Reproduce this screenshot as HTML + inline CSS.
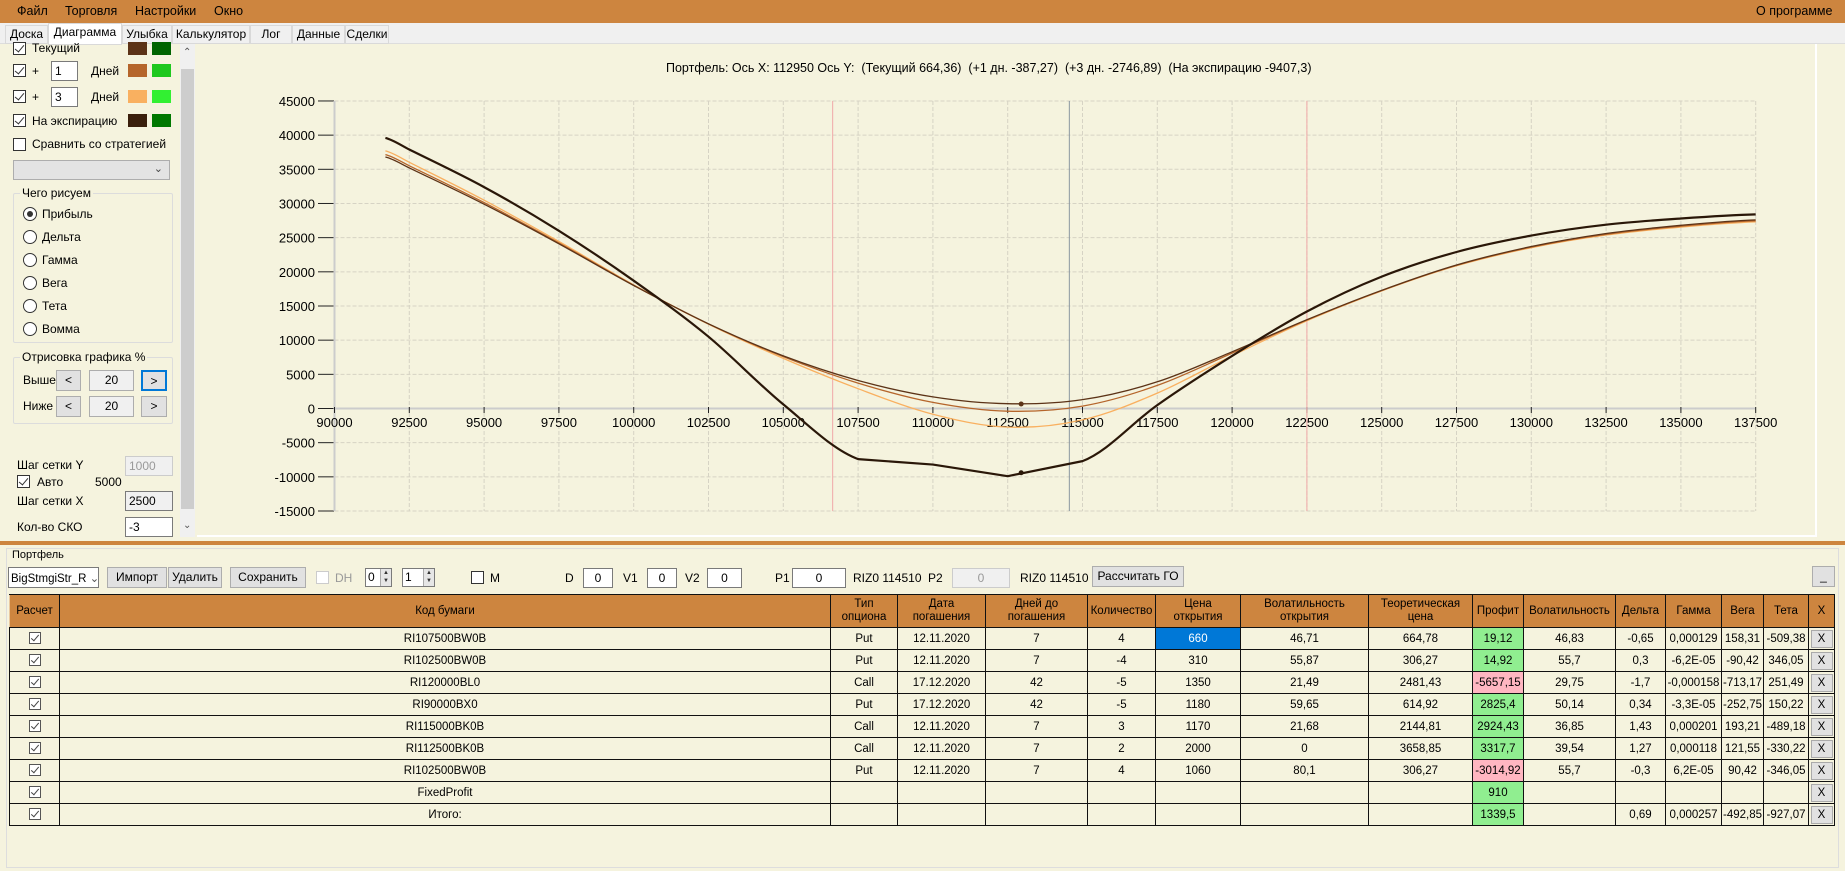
<!DOCTYPE html>
<html><head><meta charset="utf-8">
<style>
*{box-sizing:border-box;margin:0;padding:0}
body{width:1845px;height:871px;overflow:hidden;background:#f5f3de;font-family:"Liberation Sans",sans-serif;font-size:12px;color:#000;position:relative}
.a{position:absolute;white-space:nowrap}
.menu{left:0;top:0;width:1845px;height:23px;background:#cd853f}
.menu span{position:absolute;top:4px;font-size:12.5px}
.tab{position:absolute;top:25px;height:19px;background:#f0f0f0;border:1px solid #d9d9d9;font-size:12px;text-align:center;line-height:17px}
.cb{position:absolute;width:13px;height:13px;border:1px solid #333;background:#fff}
.cb.c::after{content:"";position:absolute;left:3px;top:0px;width:4px;height:8px;border:solid #333;border-width:0 1.5px 1.5px 0;transform:rotate(40deg)}
.rd{position:absolute;width:14px;height:14px;border:1px solid #333;border-radius:50%;background:#fff}
.sw{position:absolute;width:19px;height:13px}
.tb{position:absolute;background:#fff;border:1px solid #7a7a7a;height:20px;font-size:12px;padding:2px 3px}
.btn{position:absolute;background:#e1e1e1;border:1px solid #adadad;height:21px;font-size:12px;text-align:center;line-height:19px}
.grp{position:absolute;border:1px solid #dcdcdc;border-radius:2px}
.grp span{position:absolute;top:-8px;left:6px;background:#f5f3de;padding:0 2px}
table{position:absolute;left:9px;top:594px;border-collapse:collapse;font-size:11.5px;table-layout:fixed}
td{border:1px solid #111;height:22px;text-align:center;padding:0;overflow:hidden}
tr.h td{background:#cd853f;height:33px;line-height:13px;border-color:#111;border-left-color:#e9c9a0}
.g{background:#90ee90}.r{background:#ffb6c1}.bl{background:#0078d7;color:#fff}
.x{background:#e1e1e1;border:1px solid #aaa;display:inline-block;width:22px;height:18px;line-height:17px}
.ck{display:inline-block;width:12px;height:12px;border:1px solid #555;position:relative;background:#fff;vertical-align:middle}
.ck::after{content:"";position:absolute;left:3px;top:0;width:3px;height:7px;border:solid #444;border-width:0 1px 1px 0;transform:rotate(40deg)}
.spin{position:absolute;width:11px;height:17px;background:#e6e6e6;border-left:1px solid #aaa;right:0;top:0;font-size:6px;line-height:8px;text-align:center;color:#333}
</style></head><body>
<div class="a menu">
<span style="left:17px">Файл</span><span style="left:65px">Торговля</span><span style="left:135px">Настройки</span><span style="left:214px">Окно</span><span style="left:1756px">О программе</span>
</div>
<div class="a" style="left:0;top:23px;width:1845px;height:21px;background:#f0f0f0;border-bottom:1px solid #ddd"></div>
<div class="tab" style="left:5px;width:43px">Доска</div>
<div class="tab" style="left:48px;top:23px;height:22px;width:74px;background:#fff">Диаграмма</div>
<div class="tab" style="left:122px;width:50px">Улыбка</div>
<div class="tab" style="left:172px;width:78px">Калькулятор</div>
<div class="tab" style="left:250px;width:42px">Лог</div>
<div class="tab" style="left:292px;width:53px">Данные</div>
<div class="tab" style="left:345px;width:44px">Сделки</div>

<div class="cb c" style="left:13px;top:42px"></div><div class="a" style="left:32px;top:41px">Текущий</div>
<div class="sw" style="left:128px;top:42px;background:#5c3317"></div><div class="sw" style="left:152px;top:42px;background:#006400"></div>
<div class="cb c" style="left:13px;top:64px"></div><div class="a" style="left:32px;top:64px">+</div>
<div class="tb" style="left:51px;top:61px;width:27px">1</div><div class="a" style="left:91px;top:64px">Дней</div>
<div class="sw" style="left:128px;top:64px;background:#b5652b"></div><div class="sw" style="left:152px;top:64px;background:#1ec81e"></div>
<div class="cb c" style="left:13px;top:90px"></div><div class="a" style="left:32px;top:90px">+</div>
<div class="tb" style="left:51px;top:87px;width:27px">3</div><div class="a" style="left:91px;top:90px">Дней</div>
<div class="sw" style="left:128px;top:90px;background:#f9b060"></div><div class="sw" style="left:152px;top:90px;background:#32f032"></div>
<div class="cb c" style="left:13px;top:114px"></div><div class="a" style="left:32px;top:114px">На экспирацию</div>
<div class="sw" style="left:128px;top:114px;background:#3a1f0c"></div><div class="sw" style="left:152px;top:114px;background:#007800"></div>
<div class="cb" style="left:13px;top:138px"></div><div class="a" style="left:32px;top:137px">Сравнить со стратегией</div>
<div class="a" style="left:13px;top:160px;width:157px;height:20px;background:#e3e3e3;border:1px solid #adadad"><span style="position:absolute;right:6px;top:1px;font-size:11px;color:#444">&#8964;</span></div>
<div class="grp" style="left:13px;top:193px;width:160px;height:150px"><span>Чего рисуем</span></div>
<div class="rd" style="left:23px;top:207px"><div style="position:absolute;left:3px;top:3px;width:6px;height:6px;border-radius:50%;background:#333"></div></div><div class="a" style="left:42px;top:207px">Прибыль</div>
<div class="rd" style="left:23px;top:230px"></div><div class="a" style="left:42px;top:230px">Дельта</div>
<div class="rd" style="left:23px;top:253px"></div><div class="a" style="left:42px;top:253px">Гамма</div>
<div class="rd" style="left:23px;top:276px"></div><div class="a" style="left:42px;top:276px">Вега</div>
<div class="rd" style="left:23px;top:299px"></div><div class="a" style="left:42px;top:299px">Тета</div>
<div class="rd" style="left:23px;top:322px"></div><div class="a" style="left:42px;top:322px">Вомма</div>
<div class="grp" style="left:13px;top:357px;width:160px;height:67px"><span>Отрисовка графика %</span></div>
<div class="a" style="left:23px;top:373px">Выше</div>
<div class="btn" style="left:56px;top:370px;width:25px">&lt;</div><div class="btn" style="left:89px;top:370px;width:45px;background:#f0f0f0">20</div><div class="btn" style="left:141px;top:370px;width:26px;border:2px solid #0078d7">&gt;</div>
<div class="a" style="left:23px;top:399px">Ниже</div>
<div class="btn" style="left:56px;top:396px;width:25px">&lt;</div><div class="btn" style="left:89px;top:396px;width:45px;background:#f0f0f0">20</div><div class="btn" style="left:141px;top:396px;width:26px">&gt;</div>
<div class="a" style="left:17px;top:458px">Шаг сетки Y</div><div class="tb" style="left:125px;top:456px;width:48px;background:#f0f0f0;border-color:#ccc;color:#999">1000</div>
<div class="cb c" style="left:17px;top:475px"></div><div class="a" style="left:37px;top:475px">Авто</div><div class="a" style="left:95px;top:475px">5000</div>
<div class="a" style="left:17px;top:494px">Шаг сетки X</div><div class="tb" style="left:125px;top:491px;width:48px;background:#f0f0f0">2500</div>
<div class="a" style="left:17px;top:520px">Кол-во СКО</div><div class="tb" style="left:125px;top:517px;width:48px">-3</div>
<div class="a" style="left:180px;top:44px;width:15px;height:493px;background:#f0f0f0"></div>
<div class="a" style="left:181px;top:69px;width:13px;height:440px;background:#cdcdcd"></div>
<div class="a" style="left:183px;top:47px;font-size:10px;color:#555">&#8963;</div>
<div class="a" style="left:183px;top:520px;font-size:10px;color:#555">&#8964;</div>

<div class="a" style="left:197px;top:44px;width:1620px;height:493px;border-right:2px solid #fff;border-bottom:2px solid #fff"></div>
<div class="a" style="left:666px;top:61px;font-size:12.5px">Портфель: Ось X: 112950 Ось Y:&nbsp; (Текущий 664,36)&nbsp; (+1 дн. -387,27)&nbsp; (+3 дн. -2746,89)&nbsp; (На экспирацию -9407,3)</div>
<svg id="ch" class="a" style="left:0;top:0" width="1845" height="540"></svg>

<div class="a" style="left:0;top:541px;width:1845px;height:4px;background:#cd853f"></div>
<div class="a" style="left:6px;top:548px;width:1833px;height:320px;border:1px solid #ddd"></div>
<div class="a" style="left:10px;top:549px;background:#f5f3de;padding:0 2px;font-size:11px">Портфель</div>
<div class="a" style="left:8px;top:567px;width:91px;height:21px;background:#fff;border:1px solid #7a7a7a;font-size:11.5px;padding:3px 2px">BigStmgiStr_R <span style="color:#555">&#8964;</span></div>
<div class="btn" style="left:107px;top:567px;width:60px">Импорт</div>
<div class="btn" style="left:168px;top:567px;width:54px">Удалить</div>
<div class="btn" style="left:230px;top:567px;width:76px">Сохранить</div>
<div class="cb" style="left:316px;top:571px;border-color:#ccc"></div><div class="a" style="left:335px;top:571px;color:#999">DH</div>
<div class="tb" style="left:365px;top:568px;width:27px;height:19px;padding:1px 2px">0<div class="spin">▲<br>▼</div></div>
<div class="tb" style="left:402px;top:568px;width:33px;height:19px;padding:1px 2px">1<div class="spin">▲<br>▼</div></div>
<div class="cb" style="left:471px;top:571px"></div><div class="a" style="left:490px;top:571px">M</div>
<div class="a" style="left:565px;top:571px">D</div><div class="tb" style="left:583px;top:568px;width:30px;text-align:center">0</div>
<div class="a" style="left:623px;top:571px">V1</div><div class="tb" style="left:647px;top:568px;width:30px;text-align:center">0</div>
<div class="a" style="left:685px;top:571px">V2</div><div class="tb" style="left:707px;top:568px;width:35px;text-align:center">0</div>
<div class="a" style="left:775px;top:571px">P1</div><div class="tb" style="left:792px;top:568px;width:54px;text-align:center">0</div>
<div class="a" style="left:853px;top:571px">RIZ0 114510</div>
<div class="a" style="left:928px;top:571px">P2</div><div class="tb" style="left:952px;top:568px;width:58px;text-align:center;background:#f0f0f0;border-color:#ccc;color:#999">0</div>
<div class="a" style="left:1020px;top:571px">RIZ0 114510</div>
<div class="btn" style="left:1092px;top:566px;width:92px">Рассчитать ГО</div>
<div class="btn" style="left:1812px;top:566px;width:23px">_</div>

<table>
<colgroup><col style="width:50px"><col style="width:771px"><col style="width:67px"><col style="width:88px"><col style="width:102px"><col style="width:68px"><col style="width:85px"><col style="width:128px"><col style="width:104px"><col style="width:51px"><col style="width:92px"><col style="width:50px"><col style="width:56px"><col style="width:42px"><col style="width:45px"><col style="width:26px"></colgroup>
<tr class="h"><td>Расчет</td><td>Код бумаги</td><td>Тип<br>опциона</td><td>Дата<br>погашения</td><td>Дней до<br>погашения</td><td>Количество</td><td>Цена<br>открытия</td><td>Волатильность<br>открытия</td><td>Теоретическая<br>цена</td><td>Профит</td><td>Волатильность</td><td>Дельта</td><td>Гамма</td><td>Вега</td><td>Тета</td><td>X</td></tr>
<tr><td><span class="ck"></span></td><td>RI107500BW0B</td><td>Put</td><td>12.11.2020</td><td>7</td><td>4</td><td class="bl">660</td><td>46,71</td><td>664,78</td><td class="g">19,12</td><td>46,83</td><td>-0,65</td><td>0,000129</td><td>158,31</td><td>-509,38</td><td><span class="x">X</span></td></tr>
<tr><td><span class="ck"></span></td><td>RI102500BW0B</td><td>Put</td><td>12.11.2020</td><td>7</td><td>-4</td><td>310</td><td>55,87</td><td>306,27</td><td class="g">14,92</td><td>55,7</td><td>0,3</td><td>-6,2E-05</td><td>-90,42</td><td>346,05</td><td><span class="x">X</span></td></tr>
<tr><td><span class="ck"></span></td><td>RI120000BL0</td><td>Call</td><td>17.12.2020</td><td>42</td><td>-5</td><td>1350</td><td>21,49</td><td>2481,43</td><td class="r">-5657,15</td><td>29,75</td><td>-1,7</td><td>-0,000158</td><td>-713,17</td><td>251,49</td><td><span class="x">X</span></td></tr>
<tr><td><span class="ck"></span></td><td>RI90000BX0</td><td>Put</td><td>17.12.2020</td><td>42</td><td>-5</td><td>1180</td><td>59,65</td><td>614,92</td><td class="g">2825,4</td><td>50,14</td><td>0,34</td><td>-3,3E-05</td><td>-252,75</td><td>150,22</td><td><span class="x">X</span></td></tr>
<tr><td><span class="ck"></span></td><td>RI115000BK0B</td><td>Call</td><td>12.11.2020</td><td>7</td><td>3</td><td>1170</td><td>21,68</td><td>2144,81</td><td class="g">2924,43</td><td>36,85</td><td>1,43</td><td>0,000201</td><td>193,21</td><td>-489,18</td><td><span class="x">X</span></td></tr>
<tr><td><span class="ck"></span></td><td>RI112500BK0B</td><td>Call</td><td>12.11.2020</td><td>7</td><td>2</td><td>2000</td><td>0</td><td>3658,85</td><td class="g">3317,7</td><td>39,54</td><td>1,27</td><td>0,000118</td><td>121,55</td><td>-330,22</td><td><span class="x">X</span></td></tr>
<tr><td><span class="ck"></span></td><td>RI102500BW0B</td><td>Put</td><td>12.11.2020</td><td>7</td><td>4</td><td>1060</td><td>80,1</td><td>306,27</td><td class="r">-3014,92</td><td>55,7</td><td>-0,3</td><td>6,2E-05</td><td>90,42</td><td>-346,05</td><td><span class="x">X</span></td></tr>
<tr><td><span class="ck"></span></td><td>FixedProfit</td><td></td><td></td><td></td><td></td><td></td><td></td><td></td><td class="g">910</td><td></td><td></td><td></td><td></td><td></td><td><span class="x">X</span></td></tr>
<tr><td><span class="ck"></span></td><td>Итого:</td><td></td><td></td><td></td><td></td><td></td><td></td><td></td><td class="g">1339,5</td><td></td><td>0,69</td><td>0,000257</td><td>-492,85</td><td>-927,07</td><td><span class="x">X</span></td></tr>
</table>

<script>
(function(){
var svg=document.getElementById('ch'),s='';
function X(v){return 334.5+(v-90000)/2500*74.8}
function Y(v){return 408.5-v/5000*34.17}
for(var i=0;i<=19;i++){var x=X(90000+i*2500);s+='<line x1="'+x+'" y1="101" x2="'+x+'" y2="511" stroke="#d6d3c4" stroke-dasharray="4,2"/>';}
for(var j=-3;j<=9;j++){var y=Y(j*5000);s+='<line x1="334.5" y1="'+y+'" x2="'+X(137500)+'" y2="'+y+'" stroke="#d6d3c4" stroke-dasharray="4,2"/>';
 s+='<line x1="318" y1="'+y+'" x2="334" y2="'+y+'" stroke="#222"/>';
 s+='<text x="315" y="'+(y+5)+'" text-anchor="end" font-size="13" font-family="Liberation Sans">'+(j*5000)+'</text>';}
s+='<line x1="334.5" y1="101" x2="334.5" y2="511" stroke="#ccc" stroke-width="2"/>';
s+='<line x1="334.5" y1="408.5" x2="'+X(137500)+'" y2="408.5" stroke="#ccc" stroke-width="2"/>';
for(var i=0;i<=19;i++){var x=X(90000+i*2500);s+='<line x1="'+x+'" y1="407" x2="'+x+'" y2="413" stroke="#222"/><text x="'+x+'" y="427" text-anchor="middle" font-size="13" font-family="Liberation Sans">'+(90000+i*2500)+'</text>';}
s+='<line x1="'+X(106650)+'" y1="101" x2="'+X(106650)+'" y2="511" stroke="#f0a8a8"/>';
s+='<line x1="'+X(122500)+'" y1="101" x2="'+X(122500)+'" y2="511" stroke="#f0a8a8"/>';
s+='<line x1="'+X(114560)+'" y1="101" x2="'+X(114560)+'" y2="511" stroke="#8a96a0"/>';
function cr(p){var d='M'+X(p[0][0]).toFixed(1)+' '+Y(p[0][1]).toFixed(1);
 for(var i=0;i<p.length-1;i++){var p0=p[i-1]||p[i],p1=p[i],p2=p[i+1],p3=p[i+2]||p2;
  var a=[X(p0[0]),Y(p0[1])],b=[X(p1[0]),Y(p1[1])],c=[X(p2[0]),Y(p2[1])],e=[X(p3[0]),Y(p3[1])];
  var h=c[0]-b[0],h0=b[0]-a[0]||h,h1=e[0]-c[0]||h;
  var m1=(c[1]-a[1])/(h+h0),m2=(e[1]-b[1])/(h+h1);
  d+=' C'+(b[0]+h/3).toFixed(1)+' '+(b[1]+m1*h/3).toFixed(1)+' '+(c[0]-h/3).toFixed(1)+' '+(c[1]-m2*h/3).toFixed(1)+' '+c[0].toFixed(1)+' '+c[1].toFixed(1);}
 return d;}
var cur=[[91700,36800],[92500,35200],[95000,29900],[97500,24100],[100000,18000],[102500,12400],[105000,7700],[107500,4100],[110000,1700],[112500,700],[115000,1300],[117500,3900],[120000,8300],[122500,13000],[125000,17300],[127500,21000],[130000,23700],[132500,25600],[135000,26800],[137500,27600]];
function mk(a,b,c){return cur.map(function(p){var x=p[0],t=(x-112950)/5300;var bump=Math.exp(-t*t);return [x,p[1]-a*bump+b*(x<101000?(101000-x)/9300:0)-c*(x>121000?(x-121000)/16500:0)];});}
var p1=mk(1100,350,150),p3=mk(3450,900,300);
s+='<path d="'+cr(p3)+'" fill="none" stroke="#f9b060" stroke-width="1.3"/>';
s+='<path d="'+cr(p1)+'" fill="none" stroke="#b5652b" stroke-width="1.3"/>';
s+='<path d="'+cr(cur)+'" fill="none" stroke="#5c3317" stroke-width="1.3"/>';
var expL=[[91700,39600],[92500,37900],[95000,32400],[97500,26000],[100000,18700],[102500,10500],[105000,600],[107500,-7400]];
var expR=[[115000,-7700],[117500,500],[120000,7700],[122500,14200],[125000,19300],[127500,22900],[130000,25300],[132500,26900],[135000,27800],[137500,28400]];
var d=cr(expL)+' L'+X(110000)+' '+Y(-8200)+' L'+X(112500)+' '+Y(-9900)+' L'+X(115000)+' '+Y(-7700)+' '+cr(expR).replace('M','L');
s+='<path d="'+d+'" fill="none" stroke="#2a1708" stroke-width="2.2" stroke-linejoin="round"/>';
s+='<circle cx="'+X(112950)+'" cy="'+Y(664)+'" r="2.5" fill="#5c3317"/>';
s+='<circle cx="'+X(112950)+'" cy="'+Y(-9407)+'" r="2.5" fill="#2a1708"/>';
svg.innerHTML=s;
})();
</script>
</body></html>
